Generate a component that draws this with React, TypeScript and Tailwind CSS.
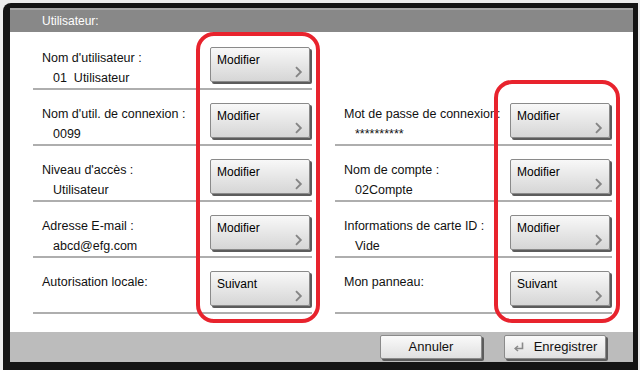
import React from "react";

const Chevron = () => (
  <svg width="9" height="12" viewBox="0 0 9 12" className="absolute right-[6px] bottom-[3px]">
    <path d="M2 1.2 L6.8 6 L2 10.8" fill="none" stroke="#858585" strokeWidth="1.9" />
  </svg>
);

function SideButton({ label }: { label: string }) {
  return (
    <div className="relative mt-[7px] mr-[2px] h-[35px] w-[100px] rounded-[2px] border border-[#8a8a8a] bg-gradient-to-b from-[#f8f8f8] to-[#d6d6d6] shadow-[2px_2px_0_#5c5c5c]">
      <span className="absolute left-[6px] top-[4px] text-[12px] leading-[16px] text-black">{label}</span>
      <Chevron />
    </div>
  );
}

function Row({ label, value, button }: { label: string; value?: string; button: string }) {
  return (
    <div className="h-[56px]">
      <div className="flex h-[48px] justify-between">
        <div className="pt-[9px]">
          <div className="whitespace-pre pl-[9px] text-[12.5px] leading-[18px] text-[#111]">{label}</div>
          {value && (
            <div className="mt-[2px] whitespace-pre pl-[20px] text-[12.5px] leading-[18px] text-[#111]">{value}</div>
          )}
        </div>
        <SideButton label={button} />
      </div>
      <div className="h-[2px] bg-[#aeaeae]" />
    </div>
  );
}

function EnterIcon() {
  return (
    <svg width="12" height="12" viewBox="0 0 12 12">
      <path d="M9.5 1.5 V7.5 H2.5" fill="none" stroke="#8a8a8a" strokeWidth="1.6" />
      <path d="M5 5 L2.2 7.5 L5 10" fill="none" stroke="#8a8a8a" strokeWidth="1.6" />
    </svg>
  );
}

function FooterButton({ children }: { children: React.ReactNode }) {
  return (
    <div className="flex h-[24px] w-[102px] items-center justify-center gap-[9px] rounded-[2px] border border-[#8a8a8a] bg-gradient-to-b from-[#fafafa] to-[#e0e0e0] text-[13px] text-[#111] shadow-[2px_2px_0_#5c5c5c]">
      {children}
    </div>
  );
}

export default function App() {
  return (
    <div
      className="relative h-[370px] w-[640px] overflow-hidden bg-[#ececec]"
      style={{ fontFamily: '"Liberation Sans", Arial, sans-serif' }}
    >
      <div className="ml-[3px] mt-[3px] h-[367px] w-[635px] rounded-tl-[8px] bg-[#141414] pl-[7px] pt-[5px]">
        <div className="flex h-[354px] w-[623px] flex-col border-t-2 border-[#a6a6a6]">
          <div className="flex h-[22px] items-center bg-[#888888] pl-[32px] text-[12px] text-white">Utilisateur:</div>
          <div className="h-[300px] bg-white pl-[23px] pt-[8px]">
            <div className="grid grid-cols-[279px_277px] gap-x-[23px]">
              <div>
                <Row label="Nom d'utilisateur :" value="01  Utilisateur" button="Modifier" />
                <Row label="Nom d'util. de connexion :" value="0099" button="Modifier" />
                <Row label="Niveau d'accès :" value="Utilisateur" button="Modifier" />
                <Row label="Adresse E-mail :" value="abcd@efg.com" button="Modifier" />
                <Row label="Autorisation locale:" button="Suivant" />
              </div>
              <div>
                <div className="h-[56px]" />
                <Row label="Mot de passe de connexion:" value="**********" button="Modifier" />
                <Row label="Nom de compte :" value="02Compte" button="Modifier" />
                <Row label="Informations de carte ID :" value="Vide" button="Modifier" />
                <Row label="Mon panneau:" button="Suivant" />
              </div>
            </div>
          </div>
          <div className="flex h-[30px] items-center justify-end gap-[22px] bg-[#bcbcbc] pr-[27px]">
            <FooterButton>Annuler</FooterButton>
            <FooterButton>
              <EnterIcon />
              <span>Enregistrer</span>
            </FooterButton>
          </div>
        </div>
      </div>
      <div className="pointer-events-none absolute left-[196px] top-[32px] h-[291px] w-[124px] rounded-[18px] border-4 border-[#e8232d]" />
      <div className="pointer-events-none absolute left-[494px] top-[80px] h-[243px] w-[126px] rounded-[18px] border-4 border-[#e8232d]" />
    </div>
  );
}
